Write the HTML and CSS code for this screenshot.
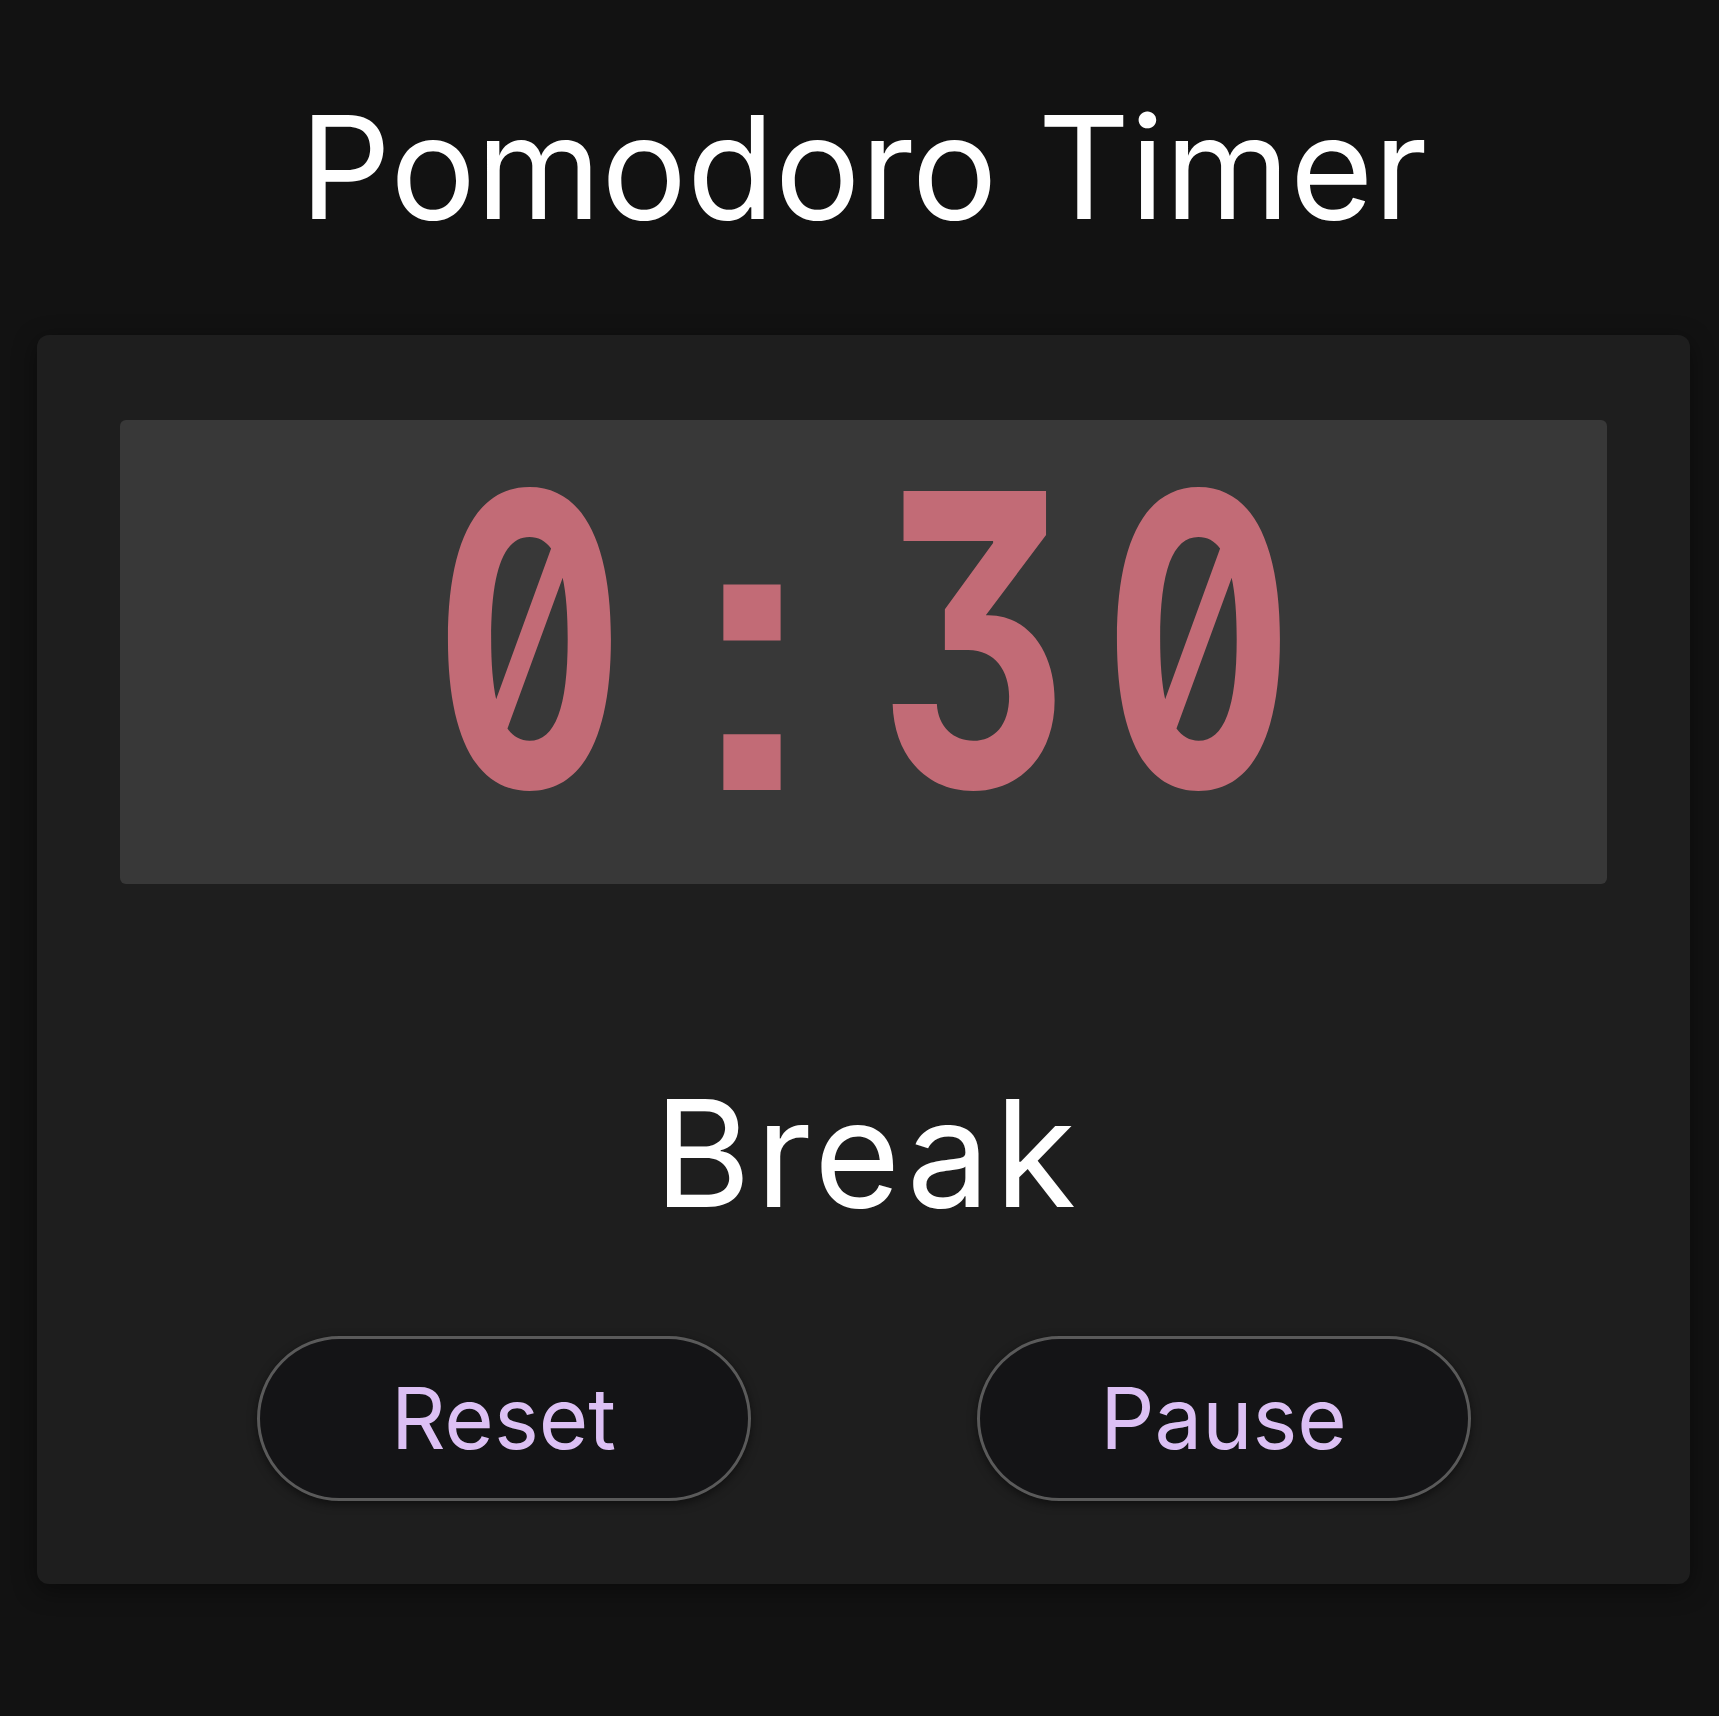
FILE: index.html
```html
<!DOCTYPE html>
<html lang="en">
<head>
<meta charset="utf-8">
<title>Pomodoro Timer</title>
<link rel="stylesheet" href="styles.css">
</head>
<body>
<main class="page">
  <h1 class="title">Pomodoro Timer</h1>
  <section class="card">
    <div class="display">
      <div class="time"><span class="ch">0</span><span class="ch colon">:</span><span class="ch">3</span><span class="ch">0</span></div>
    </div>
    <div class="mode">Break</div>
    <div class="controls">
      <button class="btn" type="button">Reset</button>
      <button class="btn" type="button">Pause</button>
    </div>
  </section>
</main>
</body>
</html>
```

FILE: styles.css
```css
html, body {
  margin: 0;
  padding: 0;
  background: #121212;
}

body {
  font-family: "Inter", "Liberation Sans", sans-serif;
  color: #ffffff;
  min-height: 1716px;
  box-sizing: border-box;
}

.page {
  padding: 0 29px 0 37px;
  display: flex;
  flex-direction: column;
  align-items: stretch;
}

.title {
  margin: 95px 0 0;
  font-size: 143px;
  font-weight: 400;
  line-height: 1;
  text-align: center;
  color: #ffffff;
}

.card {
  margin-top: 97px;
  background: #1e1e1e;
  border-radius: 12px;
  padding: 85px 83px 83px;
  box-shadow: 0 6px 24px rgba(0, 0, 0, 0.45);
  display: flex;
  flex-direction: column;
  align-items: stretch;
}

.display {
  height: 464px;
  background: #383838;
  border-radius: 6px;
  display: flex;
  align-items: center;
  justify-content: center;
}

.time {
  display: flex;
  align-items: baseline;
  padding-bottom: 26px;
  font-family: "Inter", "DejaVu Sans", sans-serif;
  font-weight: 700;
  font-size: 407px;
  line-height: 1;
  color: #c26b76;
  font-feature-settings: "tnum" 1, "zero" 1, "cv09" 1;
}

.ch {
  display: flex;
  justify-content: center;
  width: 223px;
  transform: scaleX(0.72);
}

.colon {
  font-family: "Liberation Sans", "Arial", sans-serif;
  line-height: 0.95;
  transform: translateY(3px);
}

.mode {
  margin-top: 196px;
  font-size: 148px;
  line-height: 1;
  text-align: center;
  letter-spacing: 5px;
  padding-left: 8px;
  color: #ffffff;
}

.controls {
  margin-top: 108px;
  display: flex;
  justify-content: center;
  gap: 226px;
}

.btn {
  width: 494px;
  height: 165px;
  border-radius: 999px;
  border: 3px solid #5a5a5a;
  background: #141416;
  color: #dcc0f4;
  font-family: "Inter", "Liberation Sans", sans-serif;
  font-size: 85px;
  line-height: 1;
  padding: 0;
  box-shadow: 0 3px 10px rgba(0, 0, 0, 0.5);
  cursor: pointer;
}
```
